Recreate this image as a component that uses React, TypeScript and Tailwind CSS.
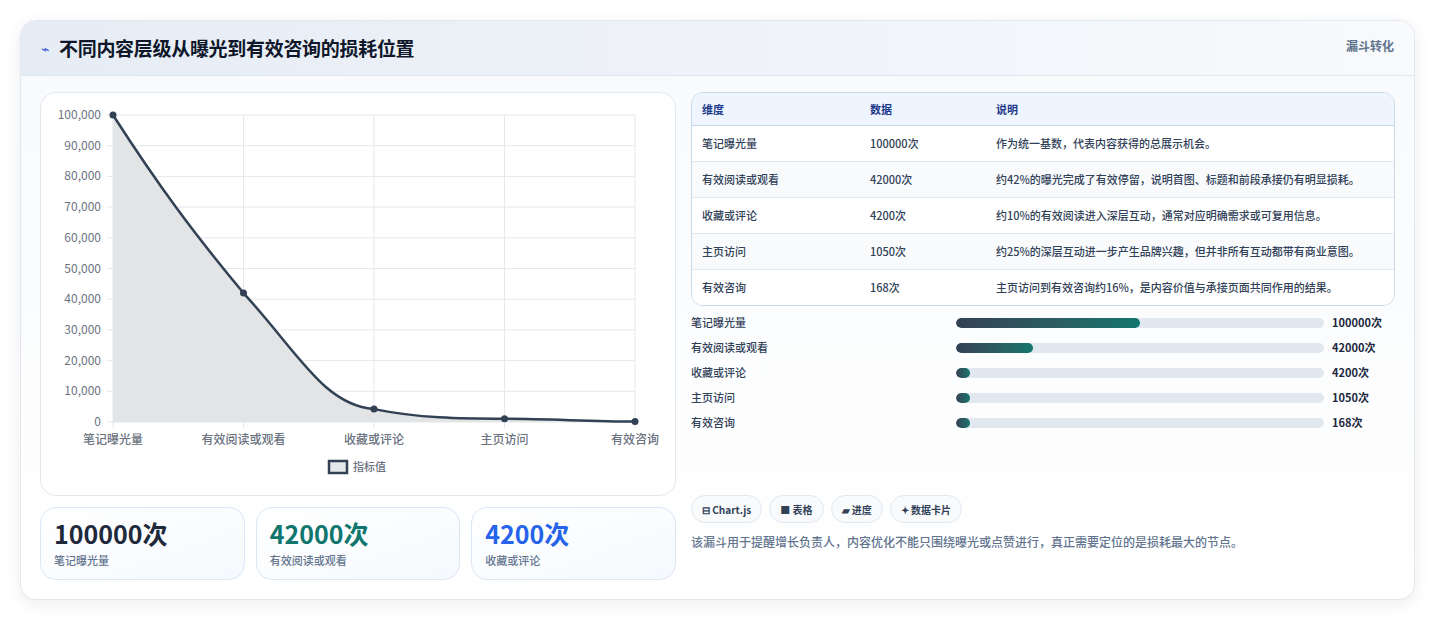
import React from 'react'

const FONT = { fontFamily: '"Noto Sans CJK SC", "Noto Sans", sans-serif' }

const ROWS = [
  { name: '笔记曝光量', value: 100000, desc: '作为统一基数，代表内容获得的总展示机会。' },
  { name: '有效阅读或观看', value: 42000, desc: '约42%的曝光完成了有效停留，说明首图、标题和前段承接仍有明显损耗。' },
  { name: '收藏或评论', value: 4200, desc: '约10%的有效阅读进入深层互动，通常对应明确需求或可复用信息。' },
  { name: '主页访问', value: 1050, desc: '约25%的深层互动进一步产生品牌兴趣，但并非所有互动都带有商业意图。' },
  { name: '有效咨询', value: 168, desc: '主页访问到有效咨询约16%，是内容价值与承接页面共同作用的结果。' },
]

function Chart() {
  const x0 = 72, x1 = 594, y0 = 22, y1 = 329
  const xs = ROWS.map((_, i) => x0 + ((x1 - x0) / 4) * i)
  const ys = ROWS.map(r => y1 - (r.value / 100000) * (y1 - y0))
  const line = `M${xs[0]},${ys[0]} C${xs[0] + 45},${ys[0] + 70} ${xs[1] - 50},${ys[1] - 60} ${xs[1]},${ys[1]} C${xs[1] + 55},${ys[1] + 60} ${xs[2] - 50},${ys[2] - 4} ${xs[2]},${ys[2]} C${xs[2] + 45},${ys[2] + 9} ${xs[3] - 45},${ys[3]} ${xs[3]},${ys[3]} C${xs[3] + 45},${ys[3]} ${xs[4] - 45},${ys[4]} ${xs[4]},${ys[4]}`
  return (
    <svg width="636" height="404" className="block" style={FONT}>
      {Array.from({ length: 11 }).map((_, i) => {
        const y = y0 + ((y1 - y0) / 10) * i
        return (
          <g key={i}>
            <line x1={x0 - 6} x2={x1} y1={y} y2={y} stroke="#e5e7eb" />
            <text x={x0 - 12} y={y + 4} textAnchor="end" fontSize="12" fill="#6b7280">
              {(100000 - i * 10000).toLocaleString('en-US')}
            </text>
          </g>
        )
      })}
      {xs.map((x, i) => (
        <g key={i}>
          <line x1={x} x2={x} y1={y0} y2={y1 + 6} stroke="#e5e7eb" />
          <text x={x} y={y1 + 22} textAnchor="middle" fontSize="12" fontWeight="500" fill="#6b7280">{ROWS[i].name}</text>
        </g>
      ))}
      <path d={`${line} L${x1},${y1} L${x0},${y1} Z`} fill="#e3e4e6" />
      <path d={line} fill="none" stroke="#334155" strokeWidth="2.5" />
      {xs.map((x, i) => (
        <circle key={i} cx={x} cy={ys[i]} r="3.5" fill="#334155" />
      ))}
      <rect x="288" y="368" width="18" height="12" fill="#e5e7eb" stroke="#334155" strokeWidth="2.5" />
      <text x="312" y="378" fontSize="11" fontWeight="500" fill="#6b7280">指标值</text>
    </svg>
  )
}

export default function App() {
  return (
    <div className="min-h-screen bg-white pt-5 px-5 text-slate-800" style={FONT}>
      <div className="rounded-2xl border border-slate-200 bg-white shadow-[0_4px_16px_rgba(15,23,42,0.08)] overflow-hidden h-[580px]">
        <div className="h-[55px] flex items-center justify-between pl-[20px] pr-5 bg-gradient-to-r from-[#e6ecf5] to-[#f8fafc] border-b border-[#dbe7f3]">
          <div className="flex items-center gap-2.5">
            <span className="text-[#3b5bdb] text-sm">⌁</span>
            <h2 className="text-[19px] font-bold text-[#0f172a] tracking-[-0.3px]">不同内容层级从曝光到有效咨询的损耗位置</h2>
          </div>
          <span className="text-[12px] font-bold text-slate-500 self-start mt-4">漏斗转化</span>
        </div>
        <div className="flex gap-[15px] px-[19px] pt-[16px] bg-gradient-to-b from-[#f8fafc] to-white">
          <div className="w-[636px] flex flex-col gap-[11px]">
            <div className="rounded-2xl border border-slate-200 bg-white h-[404px]">
              <Chart />
            </div>
            <div className="grid grid-cols-3 gap-[11px]">
              {[
                { v: '100000次', l: '笔记曝光量', c: 'text-[#1e293b]' },
                { v: '42000次', l: '有效阅读或观看', c: 'text-[#0f766e]' },
                { v: '4200次', l: '收藏或评论', c: 'text-[#2563eb]' },
              ].map(s => (
                <div key={s.l} className="rounded-2xl border border-[#dbe7f3] bg-gradient-to-br from-white to-[#f5f9fd] h-[73px] px-[13px] pt-[8px]">
                  <div className={`text-[25px] font-bold leading-[34px] ${s.c}`}>{s.v}</div>
                  <div className="text-[11px] font-medium text-slate-500 mt-[2px]">{s.l}</div>
                </div>
              ))}
            </div>
          </div>
          <div className="w-[704px] flex flex-col">
            <div className="rounded-xl border border-[#c9d8ea] overflow-hidden text-[11px] font-medium">
              <div className="flex h-[33px] items-center bg-[#eef5fe] border-b border-[#c9d8ea] font-bold text-[#1e3a8a] px-[10px]">
                <span className="w-[168px]">维度</span>
                <span className="w-[126px]">数据</span>
                <span>说明</span>
              </div>
              {ROWS.map((r, i) => (
                <div key={r.name} className={`flex px-[10px] py-[9px] leading-[17px] ${i % 2 ? 'bg-[#f8fafc]' : 'bg-white'} ${i < 4 ? 'border-b border-slate-200' : ''}`}>
                  <span className="w-[168px] shrink-0 text-slate-700">{r.name}</span>
                  <span className="w-[126px] shrink-0 text-slate-700">{r.value}次</span>
                  <span className="flex-1 pr-6 text-slate-700">{r.desc}</span>
                </div>
              ))}
            </div>
            <div className="flex flex-col gap-[8px] mt-[8px]">
              {ROWS.map(r => (
                <div key={r.name} className="flex items-center h-[17px] text-[11px] font-medium">
                  <span className="w-[265px] text-slate-700">{r.name}</span>
                  <div className="w-[368px] h-[10px] rounded-full bg-[#e2e8f0] overflow-hidden">
                    <div
                      className="h-full rounded-full bg-gradient-to-r from-[#334155] to-[#0f766e]"
                      style={{ width: `max(14px, ${(r.value / 100000) * 50}%)` }}
                    />
                  </div>
                  <span className="ml-2 font-bold text-slate-800">{r.value}次</span>
                </div>
              ))}
            </div>
            <div className="flex gap-[7px] mt-[64px]">
              {['⊟ Chart.js', '■ 表格', '▰ 进度', '✦ 数据卡片'].map(c => (
                <span key={c} className="h-[28px] px-[10px] flex items-center rounded-full border border-slate-200 bg-[#f8fafc] text-[10px] font-bold text-slate-700">{c}</span>
              ))}
            </div>
            <p className="mt-[10px] text-[12px] font-medium text-slate-500">该漏斗用于提醒增长负责人，内容优化不能只围绕曝光或点赞进行，真正需要定位的是损耗最大的节点。</p>
          </div>
        </div>
      </div>
    </div>
  )
}
